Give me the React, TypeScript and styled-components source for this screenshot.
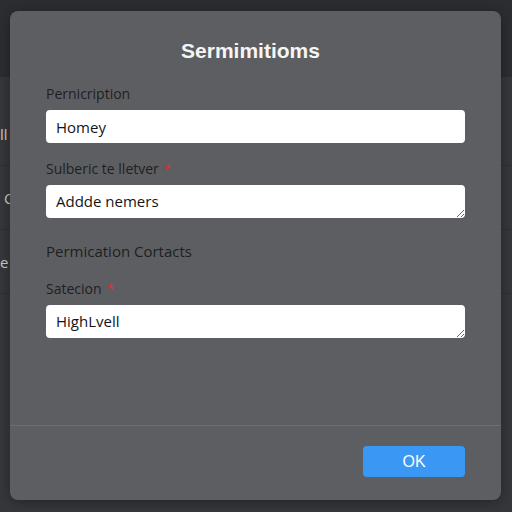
import React from "react";
import styled, { createGlobalStyle } from "styled-components";

const GlobalStyle = createGlobalStyle`
  html, body {
    margin: 0;
    padding: 0;
    background: #2f3034;
  }
  * {
    box-sizing: border-box;
  }
`;

const Page = styled.div`
  position: relative;
  width: 512px;
  height: 512px;
  overflow: hidden;
  background: #36373a;
  font-family: "Open Sans", "Noto Sans", sans-serif;
`;

const TopBar = styled.div`
  height: 77px;
  background: #2c2d30;
`;

const BackList = styled.div`
  display: flex;
  flex-direction: column;
  padding-top: 25px;
`;

const BackRow = styled.div<{ $indent?: number }>`
  height: 64px;
  display: flex;
  align-items: center;
  padding-left: ${(p) => p.$indent ?? 0}px;
  border-bottom: 1px solid #2e2f32;
  color: #c9cacc;
  font-size: 15px;
  white-space: nowrap;
`;

const Modal = styled.div`
  position: absolute;
  top: 11px;
  left: 10px;
  right: 11px;
  bottom: 12px;
  display: flex;
  flex-direction: column;
  background: #5d5e62;
  border-radius: 8px;
  box-shadow: 0 2px 12px rgba(0, 0, 0, 0.35);
`;

const Title = styled.h2`
  margin: 0;
  padding: 28px 10px 0 0;
  text-align: center;
  font-family: "Liberation Sans", Arial, sans-serif;
  font-weight: 700;
  font-size: 21px;
  line-height: 24px;
  color: #f5f5f5;
`;

const Body = styled.div`
  flex: 1;
  display: flex;
  flex-direction: column;
  padding: 22px 36px 0;
`;

const Field = styled.div`
  display: flex;
  flex-direction: column;
  gap: 7px;
  margin-bottom: 17px;
`;

const Label = styled.label`
  font-size: 14px;
  line-height: 18px;
  color: #1d1e21;
`;

const Required = styled.span`
  margin-left: 5px;
  color: #d9313b;
`;

const SectionHeading = styled.div`
  margin: 6px 0 19px;
  font-size: 15px;
  line-height: 20px;
  color: #1d1e21;
`;

const TextInput = styled.input`
  height: 33px;
  padding: 0 10px;
  border: none;
  border-radius: 4px;
  background: #ffffff;
  font-family: "Open Sans", "Noto Sans", sans-serif;
  font-size: 15px;
  color: #141518;
  outline: none;
`;

const TextArea = styled.textarea`
  height: 33px;
  padding: 6px 10px;
  border: none;
  border-radius: 4px;
  background: #ffffff;
  font-family: "Open Sans", "Noto Sans", sans-serif;
  font-size: 15px;
  line-height: 20px;
  color: #141518;
  resize: vertical;
  overflow: hidden;
  outline: none;
`;

const Footer = styled.div`
  display: flex;
  justify-content: flex-end;
  padding: 20px 36px 23px;
  border-top: 1px solid #6d6e72;
`;

const OkButton = styled.button`
  width: 102px;
  height: 31px;
  border: none;
  border-radius: 4px;
  background: #3a97f4;
  color: #ffffff;
  font-family: "Liberation Sans", Arial, sans-serif;
  font-size: 16px;
  cursor: pointer;
`;

export default function App() {
  return (
    <>
      <GlobalStyle />
      <Page>
        <TopBar />
        <BackList>
          <BackRow $indent={0}>ll</BackRow>
          <BackRow $indent={4}>C</BackRow>
          <BackRow $indent={0}>e</BackRow>
        </BackList>

        <Modal>
          <Title>Sermimitioms</Title>
          <Body>
            <Field>
              <Label>Pernicription</Label>
              <TextInput defaultValue="Homey" />
            </Field>
            <Field>
              <Label>
                Sulberic te lletver<Required>*</Required>
              </Label>
              <TextArea rows={1} defaultValue="Addde nemers" />
            </Field>
            <SectionHeading>Permication Cortacts</SectionHeading>
            <Field>
              <Label>
                Satecion<Required>*</Required>
              </Label>
              <TextArea rows={1} defaultValue="HighLvell" />
            </Field>
          </Body>
          <Footer>
            <OkButton>OK</OkButton>
          </Footer>
        </Modal>
      </Page>
    </>
  );
}
